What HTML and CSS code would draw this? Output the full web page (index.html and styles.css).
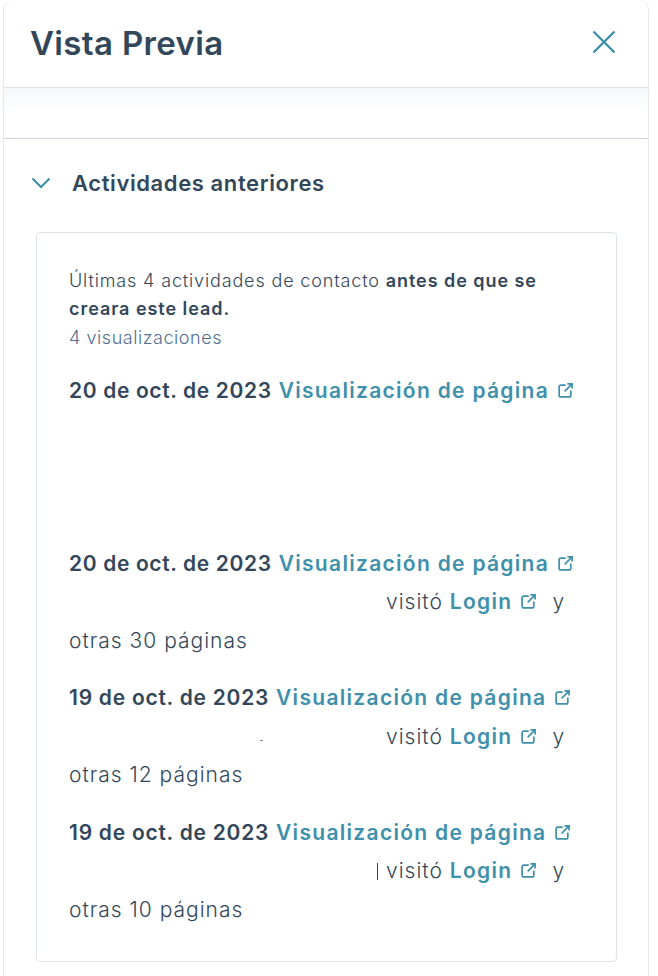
FILE: index.html
```html
<!DOCTYPE html>
<html lang="es">
<head>
<meta charset="utf-8">
<title>Vista Previa</title>
<link rel="stylesheet" href="styles.css">
</head>
<body>
<svg class="defs" width="0" height="0" aria-hidden="true"><defs>
<symbol id="ext" viewBox="0 0 16 16"><path d="M8.200 3H3.600A1.600 1.600 0 0 0 2 4.600V12.400A1.600 1.600 0 0 0 3.600 14H11.400A1.600 1.600 0 0 0 13 12.400V8M9.800 1.800H14.200V6.200M14.200 1.800 7.200 8.800" fill="none" stroke="currentColor" stroke-width="1.600"/></symbol>
</defs></svg>
<main class="panel">
  <header class="head">
    <h1 class="title">Vista Previa</h1>
    <svg class="close" viewBox="0 0 24 24" aria-label="Cerrar"><path d="M1.500 1.500 22.500 22.500M22.500 1.500 1.500 22.500" fill="none" stroke="currentColor" stroke-width="2.400"/></svg>
  </header>
  <div class="strip"></div>
  <section class="section">
    <div class="section-head">
      <svg class="chev" viewBox="0 0 20 12"><path d="M1.500 1.500 10 10 18.500 1.500" fill="none" stroke="currentColor" stroke-width="2.200"/></svg>
      <h2 class="section-title">Actividades anteriores</h2>
    </div>
    <div class="card">
      <p class="intro">Últimas 4 actividades de contacto <b>antes de que se creara este lead.</b></p>
      <p class="count">4 visualizaciones</p>

      <article class="entry entry-first">
        <div class="line"><b class="date">20 de oct. de 2023</b> <a class="link">Visualización de página<svg class="ext"><use href="#ext"/></svg></a></div>
        <div class="blank"></div>
      </article>

      <article class="entry">
        <div class="line"><b class="date">20 de oct. de 2023</b> <a class="link">Visualización de página<svg class="ext"><use href="#ext"/></svg></a></div>
        <div class="line indent">visitó <a class="link">Login<svg class="ext"><use href="#ext"/></svg></a><span class="y">y</span></div>
        <div class="line">otras 30 páginas</div>
      </article>

      <article class="entry">
        <div class="line"><b class="date tight">19 de oct. de 2023</b> <a class="link">Visualización de página<svg class="ext"><use href="#ext"/></svg></a></div>
        <div class="line indent"><i class="speck"></i>visitó <a class="link">Login<svg class="ext"><use href="#ext"/></svg></a><span class="y">y</span></div>
        <div class="line">otras 12 páginas</div>
      </article>

      <article class="entry">
        <div class="line"><b class="date tight">19 de oct. de 2023</b> <a class="link">Visualización de página<svg class="ext"><use href="#ext"/></svg></a></div>
        <div class="line indent"><i class="bar"></i>visitó <a class="link">Login<svg class="ext"><use href="#ext"/></svg></a><span class="y">y</span></div>
        <div class="line">otras 10 páginas</div>
      </article>
    </div>
  </section>
</main>
</body>
</html>
```
FILE: styles.css
```css
* { box-sizing: border-box; }
html, body { margin: 0; padding: 0; background: #fff; }
body { height: 976px; overflow: hidden; font-family: "Inter", "Liberation Sans", sans-serif; color: #33475b; }
.defs { position: absolute; }
.panel { width: 646px; height: 976px; margin-left: 3px; border-left: 1px solid #e3e8ef; border-right: 1px solid #e3e8ef; border-top-left-radius: 10px; border-top-right-radius: 10px; }
.head { height: 88px; display: flex; align-items: center; justify-content: space-between; padding: 0 32px 2px 26px; border-bottom: 1px solid #dfe3eb; }
.title { margin: 0; font-size: 33px; font-weight: 600; letter-spacing: .35px; }
.close { width: 24px; height: 24px; color: #3f90ab; margin-bottom: 2px; }
.strip { height: 51px; background: linear-gradient(#f5f8fa, #fff 24px); border-bottom: 1px solid #cbd6e2; }
.section { padding: 0 31px 0 32px; }
.section-head { height: 93px; margin-left: -5px; display: flex; align-items: center; gap: 21px; padding-bottom: 5px; }
.chev { width: 20px; height: 12px; color: #3f90ab; }
.section-title { margin: 0; font-size: 22px; font-weight: 600; letter-spacing: .6px; }
.card { height: 730px; border: 1px solid #dfe3eb; border-radius: 4px; padding: 34px 32px 0 32px; }
.intro { margin: 0; font-size: 18px; line-height: 28px; font-weight: 300; letter-spacing: .85px; }
.intro b { font-weight: 600; letter-spacing: .95px; }
.count { margin: 0; font-size: 18px; line-height: 29px; font-weight: 300; letter-spacing: .55px; color: #516f90; }
.entry { margin-bottom: 19.600px; }
.entry-first { margin-top: 20px; }
.line { height: 38.300px; line-height: 38.300px; font-size: 21px; font-weight: 300; letter-spacing: 1px; white-space: nowrap; }
.blank { height: 115.100px; }
.date { font-weight: 600; font-size: 21px; letter-spacing: .64px; }
.date.tight { letter-spacing: .75px; }
.link { color: #3f90ab; font-weight: 600; font-size: 21px; letter-spacing: 1.300px; }
.ext { width: 17px; height: 17px; margin-left: 8px; vertical-align: -1px; color: #3f90ab; }
.indent { padding-left: 317px; position: relative; }
.y { margin-left: 15px; }
.bar { position: absolute; left: 308px; top: 11px; width: 1px; height: 17px; background: #33475b; }
.speck { position: absolute; left: 191px; top: 22px; width: 3px; height: 1px; background: #7c8ea3; }
```
